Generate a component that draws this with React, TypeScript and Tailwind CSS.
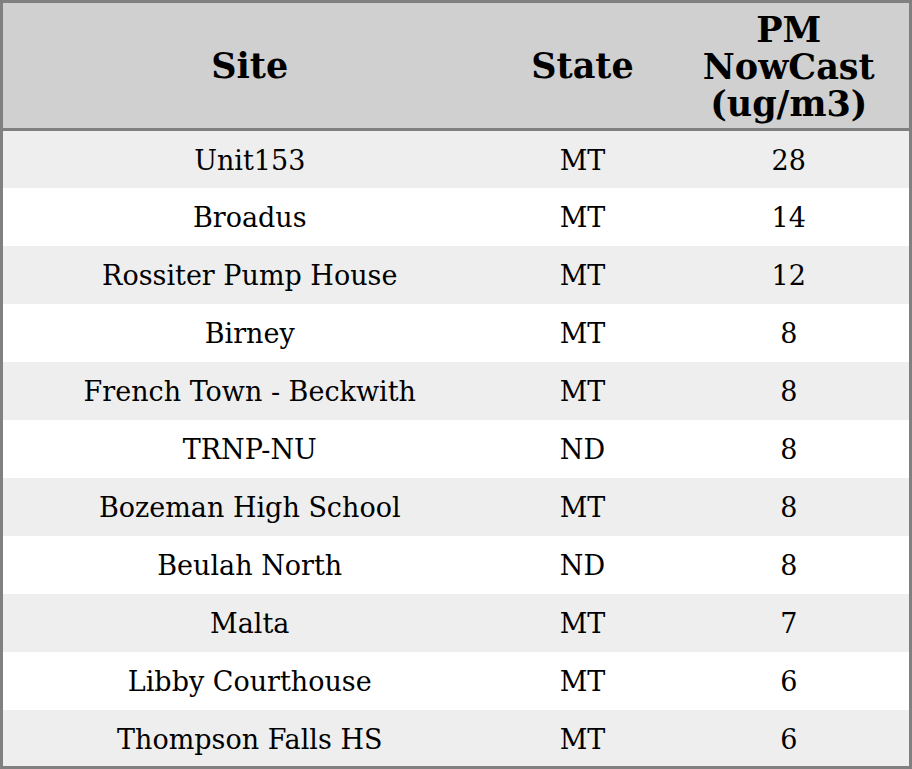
const rows: [string, string, number][] = [
  ["Unit153", "MT", 28],
  ["Broadus", "MT", 14],
  ["Rossiter Pump House", "MT", 12],
  ["Birney", "MT", 8],
  ["French Town - Beckwith", "MT", 8],
  ["TRNP-NU", "ND", 8],
  ["Bozeman High School", "MT", 8],
  ["Beulah North", "ND", 8],
  ["Malta", "MT", 7],
  ["Libby Courthouse", "MT", 6],
  ["Thompson Falls HS", "MT", 6],
];

export default function App() {
  return (
    <div className="w-[912px] h-[769px] bg-white font-['DejaVu_Serif',serif] text-black">
      <table className="w-full border-collapse border-[3px] border-[#808080] table-fixed">
        <colgroup>
          <col className="w-[495px]" />
          <col className="w-[172px]" />
          <col />
        </colgroup>
        <thead>
          <tr className="h-[128px] bg-[#d0d0d0] border-b-[3px] border-[#808080]">
            <th className="text-[35px] leading-[37px] font-bold text-center">Site</th>
            <th className="text-[35px] leading-[37px] font-bold text-center">State</th>
            <th className="text-[35px] leading-[37px] font-bold text-center pt-[2px]">
              PM
              <br />
              NowCast
              <br />
              (ug/m3)
            </th>
          </tr>
        </thead>
        <tbody>
          {rows.map(([site, state, pm], i) => (
            <tr
              key={site}
              className={`h-[58px] text-[27px] ${i % 2 === 0 ? "bg-[#eeeeee]" : "bg-white"}`}
            >
              <td className="text-center pt-[4px]">{site}</td>
              <td className="text-center pt-[4px]">{state}</td>
              <td className="text-center pt-[4px]">{pm}</td>
            </tr>
          ))}
        </tbody>
      </table>
    </div>
  );
}
